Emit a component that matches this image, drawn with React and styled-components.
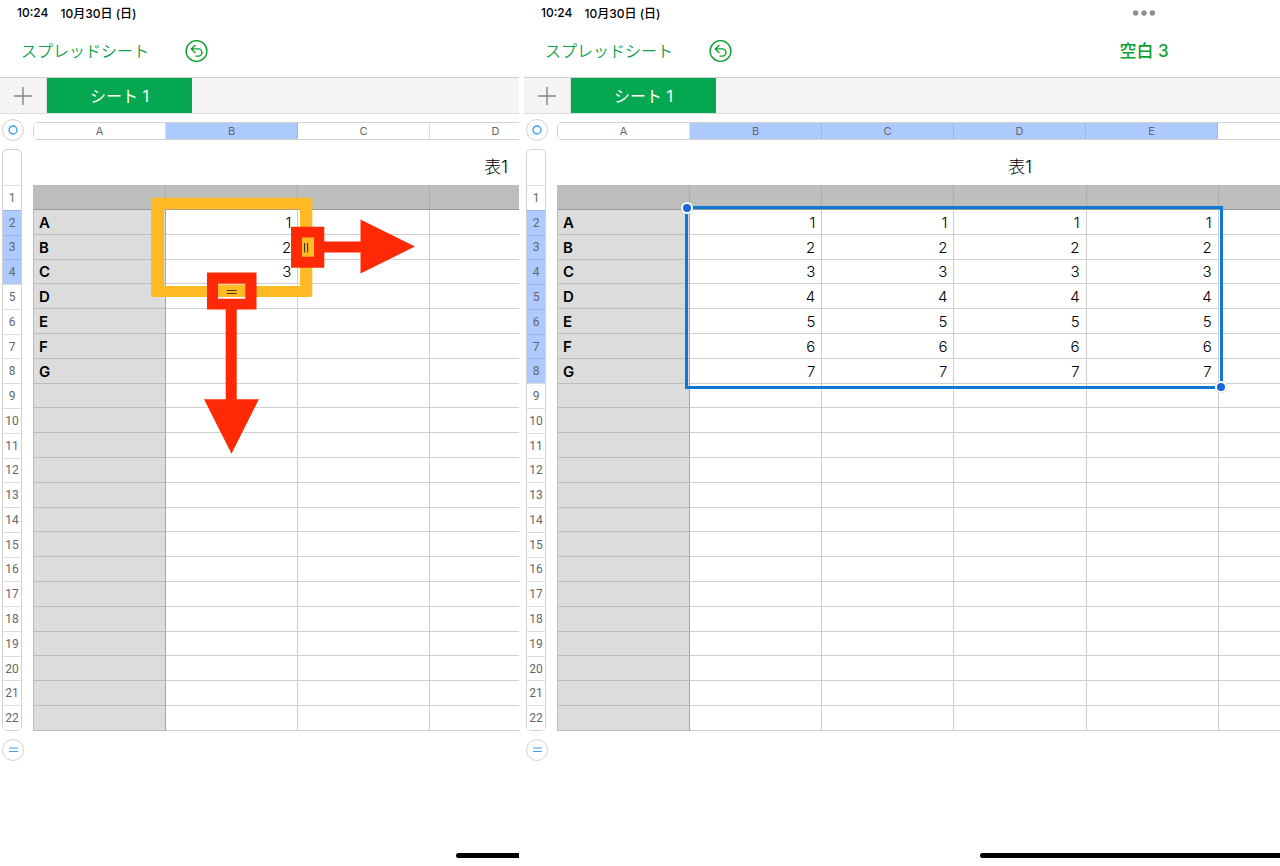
import React, { useState } from 'react';
import styled, { createGlobalStyle, css } from 'styled-components';

const GlobalStyle = createGlobalStyle`
  * {
    box-sizing: border-box;
  }

  body {
    margin: 0;
    background: #fff;
    color: #000;
    font-family: Inter, "Noto Sans CJK JP", sans-serif;
  }

  button {
    margin: 0;
    padding: 0;
    border: 0;
    background: none;
    color: inherit;
    font: inherit;
    cursor: pointer;
  }
`;

const Page = styled.main`
  display: grid;
  grid-template-columns: 519fr 756fr;
  gap: 5px;
  min-height: 100vh;
`;

const Pane = styled.section`
  display: flex;
  flex-direction: column;
  min-width: 0;
  overflow: hidden;
`;

/* The tablet is wider than the pane, so centred parts are centred on this */
const Wide = styled.div`
  display: flex;
  justify-content: center;
  width: 1240px;
`;

const StatusBar = styled.div`
  display: flex;
  align-items: center;
  gap: 12px;
  height: 25px;
  padding-left: 17px;
  font-size: 12px;
  font-weight: 500;
  white-space: nowrap;
`;

const Center = styled(Wide)`
  position: absolute;
  top: 0;
  left: 0;
  height: 100%;
  align-items: center;
  pointer-events: none;
`;

const Bar = styled.div`
  position: relative;
`;

const Toolbar = styled.header`
  display: flex;
  align-items: center;
  gap: 34px;
  height: 52px;
  padding-left: 21px;
  color: #0ba04a;
`;

const BackButton = styled.button`
  width: 130px;
  padding-bottom: 2px;
  font-family: "Noto Sans CJK JP", sans-serif;
  font-size: 16px;
  font-weight: 350;
  line-height: 24px;
  text-align: left;
  white-space: nowrap;
`;

const IconButton = styled.button`
  display: flex;
`;

const DocTitle = styled.h1`
  margin: 0;
  color: #0ba02f;
  font-size: 17px;
  font-weight: 500;
  line-height: 24px;
`;

const Tabs = styled.nav`
  display: flex;
  height: 37px;
  border-top: 1px solid #cfcfcf;
  border-bottom: 1px solid #dedede;
  background: #f5f5f5;
`;

const AddTab = styled.button`
  display: flex;
  align-items: center;
  justify-content: center;
  width: 47px;
  border-right: 1px solid #dedede;
`;

const Tab = styled.button`
  width: 145px;
  padding-bottom: 2px;
  background: #05a850;
  color: #fff;
  font-size: 16px;
  font-weight: 400;
`;

const Sheet = styled.div`
  display: grid;
  grid-template-columns: 31px 926px;
  padding: 5px 0 0 2px;
`;

const RoundButton = styled.button`
  display: flex;
  align-items: center;
  justify-content: center;
  width: 22px;
  height: 22px;
  border: 1px solid #d2d2d2;
  border-radius: 50%;
  background: #fff;
`;

const heading = css`
  background: ${(p) => (p.$selected ? '#aecbff' : '#fff')};
  color: #66666a;
`;

const ColumnBar = styled.div`
  display: grid;
  grid-template-columns: repeat(7, 1fr);
  height: 18px;
  margin: 3px 0 9px;
  border: 1px solid #d2d2d2;
  border-radius: 5px;
  overflow: hidden;
`;

const ColumnHeading = styled.button`
  ${heading}
  border-right: 1px solid ${(p) => (p.$selected ? '#98b5e6' : '#dcdcdc')};
  font-size: 11px;
  line-height: 16px;
`;

const RowBar = styled.div`
  display: grid;
  grid-template-rows: 35px repeat(22, 1fr);
  width: 20px;
  height: 582px;
  margin-bottom: 8px;
  border: 1px solid #d2d2d2;
  border-radius: 5px;
  overflow: hidden;
`;

const RowHeading = styled.button`
  ${heading}
  border-top: 1px solid ${(p) => (p.$selected ? '#98b5e6' : '#dcdcdc')};
  font-family: Roboto, sans-serif;
  font-size: 12px;
  line-height: 16px;
`;

const TableTitle = styled.h2`
  height: 36px;
  margin: 0;
  font-size: 17px;
  font-weight: 300;
  line-height: 36px;
  text-align: center;
`;

const TableArea = styled.div`
  position: relative;
`;

const Table = styled.table`
  width: 926px;
  height: 546px;
  table-layout: fixed;
  border-spacing: 0;
  border-left: 1px solid #bdbdbd;
`;

const Cell = styled.td`
  padding: 2px 6px 0;
  border-right: 1px solid #cfcfcf;
  border-bottom: 1px solid #cfcfcf;
  font-size: 15px;
  font-weight: 300;
  line-height: 20px;
  text-align: right;
`;

const HeadCell = styled.th`
  height: 25px;
  padding: 0;
  border-right: 1px solid #acaeac;
  border-bottom: 1px solid #989a98;
  background: #bdbfbd;
`;

const LabelCell = styled.th`
  height: 24px;
  padding: 2px 5px 0;
  border-right: 1px solid #a6a6a6;
  border-bottom: 1px solid #bcbcbc;
  background: #dcdcdc;
  font-size: 15px;
  font-weight: 600;
  line-height: 20px;
  text-align: left;
`;

const Selection = styled.div`
  position: absolute;
  top: 21px;
  left: 128px;
  width: 538px;
  height: 183px;
  border: 3px solid #0d78d6;
`;

const Knob = styled.span`
  position: absolute;
  width: 12px;
  height: 12px;
  border: 2px solid #fff;
  border-radius: 50%;
  background: #1766e0;
  box-shadow: 0 0 1px #999;
  ${(p) => (p.$end ? 'right: -7px; bottom: -7px;' : 'left: -7px; top: -7px;')}
`;

const Drawing = styled.svg`
  position: absolute;
  top: 0;
  left: 0;
  pointer-events: none;
`;

const HomeBar = styled(Wide)`
  margin-top: auto;
  padding-bottom: 8px;

  &::before {
    content: '';
    width: 328px;
    height: 5px;
    border-radius: 3px;
    background: #000;
  }
`;

const COLUMNS = 7;
const ROWS = Array.from({ length: 22 }, (_, i) => i + 1);
const LABELS = ['A', 'B', 'C', 'D', 'E', 'F', 'G'];

function UndoIcon() {
  return (
    <svg width="23" height="23" viewBox="0 0 23 23" fill="none" stroke="#0ba02f" strokeLinecap="round" strokeLinejoin="round">
      <circle cx="11.5" cy="11" r="10.4" strokeWidth="1.4" />
      <path d="M10 5.4 6.3 8.9l3.700 3.5M6.5 8.9h6.9a3.6 3.6 0 0 1 0 7.2h-2.4" strokeWidth="1.4" />
    </svg>
  );
}

function PlusIcon() {
  return (
    <svg width="18" height="18" viewBox="0 0 18 18" stroke="#858585" strokeWidth="1.4">
      <path d="M9 0v18M0 9h18" />
    </svg>
  );
}

function MoreIcon() {
  return (
    <svg width="24" height="6" viewBox="0 0 24 6" fill="#8e8e90">
      <circle cx="3.6" cy="3" r="2.7" />
      <circle cx="12" cy="3" r="2.7" />
      <circle cx="20.4" cy="3" r="2.7" />
    </svg>
  );
}

function FillHandles() {
  return (
    <Drawing width="400" height="280" viewBox="0 0 400 280">
      {/* autofill frame */}
      <path fill="#ffba24" fillRule="evenodd" d="M120 12.7h157.3a2 2 0 0 1 2 2v95.3a2 2 0 0 1-2 2H120a2 2 0 0 1-2-2V14.7a2 2 0 0 1 2-2zM131 24.3V101h136V24.3z" />
      {/* right handle and arrow */}
      <path fill="#fff" d="M269 52h12v20h-12z" />
      <path fill="#ffba24" d="M269 52h11v20h-11z" />
      <path stroke="#4a3a10" strokeWidth="1.2" d="M271.6 58v9.5M274.6 58v9.5" />
      <path fill="#ff2a05" fillRule="evenodd" d="M258 41.7h33.3v41H258zM269 52.4v19.3h11.7V52.4z" />
      <path fill="#ff2a05" d="M291 56.4h36.5V34.5L382 61.5l-54.5 27V67.4H291z" />
      {/* bottom handle and arrow */}
      <path fill="#fff" d="M185 98h28v16h-28z" />
      <path fill="#ffba24" d="M185 99.5h28v12.5h-28z" />
      <path stroke="#4a3a10" strokeWidth="1.2" d="M193.7 105.5h10M193.7 108.5h10" />
      <path fill="#ff2a05" fillRule="evenodd" d="M174 87.4h49.5v37.2H174zM185 98.7v15h27.3v-15z" />
      <path fill="#ff2a05" d="M192.7 124v90.2H171l27.5 54.5 27.4-54.5h-22.2V124z" />
    </Drawing>
  );
}

function Spreadsheet({ title, headings, selectedColumns, valueRows, children }) {
  const [selected, setSelected] = useState(true);
  const columns = Array.from({ length: COLUMNS }, (_, i) => headings[i] || '');
  const isSelected = (name) => selected && name !== '' && selectedColumns.includes(name);

  return (
    <Pane>
      <Bar>
        <StatusBar>
          <span>10:24</span>
          <span>10月30日 (日)</span>
        </StatusBar>
        {title && <Center><MoreIcon /></Center>}
      </Bar>
      <Bar>
        <Toolbar>
          <BackButton>スプレッドシート</BackButton>
          <IconButton aria-label="取り消す"><UndoIcon /></IconButton>
        </Toolbar>
        {title && <Center><DocTitle>{title}</DocTitle></Center>}
      </Bar>
      <Tabs>
        <AddTab aria-label="シートを追加"><PlusIcon /></AddTab>
        <Tab>シート 1</Tab>
      </Tabs>
      <Sheet>
        <RoundButton aria-label="表を選択" onClick={() => setSelected(!selected)}>
          <svg width="10" height="10" viewBox="0 0 10 10" fill="none" stroke="#3a9bfa" strokeWidth="1.3">
            <circle cx="5" cy="5" r="4" />
          </svg>
        </RoundButton>
        <ColumnBar>
          {columns.map((name, i) => (
            <ColumnHeading key={i} $selected={isSelected(name)}>{name}</ColumnHeading>
          ))}
        </ColumnBar>
        <RowBar>
          <span />
          {ROWS.map((n) => (
            <RowHeading key={n} $selected={selected && n > 1 && n <= valueRows + 1}>{n}</RowHeading>
          ))}
        </RowBar>
        <div>
          <TableTitle>表1</TableTitle>
          <TableArea>
            <Table>
              <thead>
                <tr>
                  {columns.map((name, i) => <HeadCell key={i} />)}
                </tr>
              </thead>
              <tbody>
                {ROWS.slice(0, -1).map((n) => (
                  <tr key={n}>
                    <LabelCell scope="row">{LABELS[n - 1]}</LabelCell>
                    {columns.slice(1).map((name, i) => (
                      <Cell key={i}>
                        {name !== '' && selectedColumns.includes(name) && n <= valueRows ? n : null}
                      </Cell>
                    ))}
                  </tr>
                ))}
              </tbody>
            </Table>
            {selected && children}
          </TableArea>
        </div>
        <RoundButton aria-label="行を追加">
          <svg width="9" height="6" viewBox="0 0 9 6" stroke="#3a9bfa" strokeWidth="1.2">
            <path d="M0 1h9M0 4.5h9" />
          </svg>
        </RoundButton>
      </Sheet>
      <HomeBar />
    </Pane>
  );
}

function App() {
  return (
    <>
      <GlobalStyle />
      <Page>
        <Spreadsheet headings="ABCD" selectedColumns="B" valueRows={3}>
          <FillHandles />
        </Spreadsheet>
        <Spreadsheet title="空白 3" headings="ABCDE" selectedColumns="BCDE" valueRows={7}>
          <Selection>
            <Knob />
            <Knob $end />
          </Selection>
        </Spreadsheet>
      </Page>
    </>
  );
}

export default App;
